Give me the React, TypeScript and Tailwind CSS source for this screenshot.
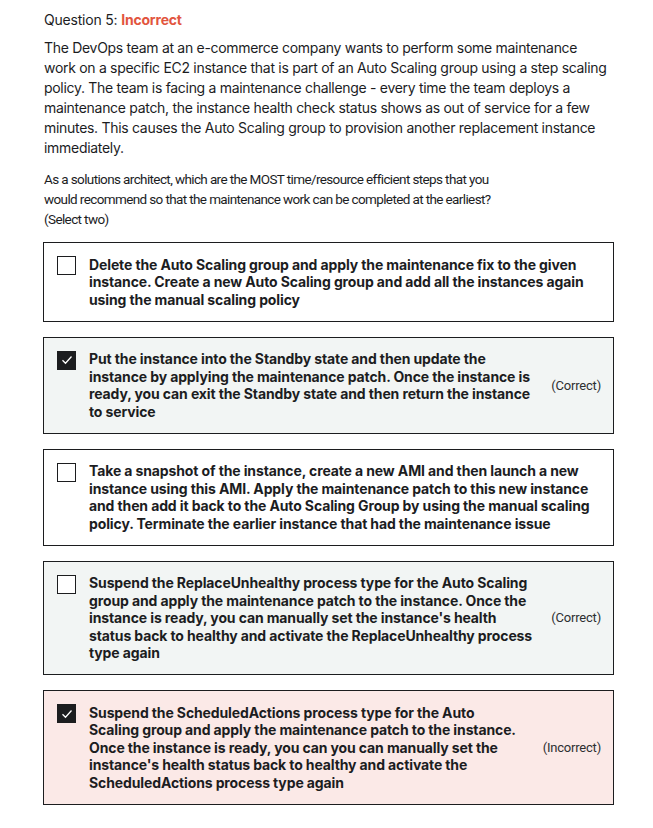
import React from "react";

type Opt = {
  lines: string[];
  checked: boolean;
  label?: string;
  bg: string;
};

const opts: Opt[] = [
  {
    lines: [
      "Delete the Auto Scaling group and apply the maintenance fix to the given",
      "instance. Create a new Auto Scaling group and add all the instances again",
      "using the manual scaling policy",
    ],
    checked: false,
    bg: "bg-white",
  },
  {
    lines: [
      "Put the instance into the Standby state and then update the",
      "instance by applying the maintenance patch. Once the instance is",
      "ready, you can exit the Standby state and then return the instance",
      "to service",
    ],
    checked: true,
    label: "(Correct)",
    bg: "bg-[#f2f5f4]",
  },
  {
    lines: [
      "Take a snapshot of the instance, create a new AMI and then launch a new",
      "instance using this AMI. Apply the maintenance patch to this new instance",
      "and then add it back to the Auto Scaling Group by using the manual scaling",
      "policy. Terminate the earlier instance that had the maintenance issue",
    ],
    checked: false,
    bg: "bg-white",
  },
  {
    lines: [
      "Suspend the ReplaceUnhealthy process type for the Auto Scaling",
      "group and apply the maintenance patch to the instance. Once the",
      "instance is ready, you can manually set the instance's health",
      "status back to healthy and activate the ReplaceUnhealthy process",
      "type again",
    ],
    checked: false,
    label: "(Correct)",
    bg: "bg-[#f2f5f4]",
  },
  {
    lines: [
      "Suspend the ScheduledActions process type for the Auto",
      "Scaling group and apply the maintenance patch to the instance.",
      "Once the instance is ready, you can you can manually set the",
      "instance's health status back to healthy and activate the",
      "ScheduledActions process type again",
    ],
    checked: true,
    label: "(Incorrect)",
    bg: "bg-[#fbe9e7]",
  },
];

function Check({ checked }: { checked: boolean }) {
  if (checked)
    return (
      <div className="w-[19px] h-[19px] shrink-0 bg-[#1c1d1f] flex items-center justify-center">
        <svg width="12" height="10" viewBox="0 0 12 10" fill="none">
          <path d="M1.5 5.2 L4.5 8.2 L10.5 1.5" stroke="white" strokeWidth="1.3" />
        </svg>
      </div>
    );
  return <div className="w-[19px] h-[19px] shrink-0 border border-[#1c1d1f] bg-white" />;
}

export default function App() {
  return (
    <div
      className="w-[653px] h-[828px] bg-white text-[#1c1d1f] pl-[44px] pt-[10px]"
      style={{ fontFamily: "Inter, 'Noto Sans', sans-serif" }}
    >
      <div className="text-[14px] leading-[20px] tracking-[-0.2px]">
        Question 5: <span className="font-bold text-[#e2553e]">Incorrect</span>
      </div>
      <div className="mt-[8px] text-[14px] leading-[20px] whitespace-nowrap tracking-[-0.3px]">
        <div>The DevOps team at an e-commerce company wants to perform some maintenance</div>
        <div>work on a specific EC2 instance that is part of an Auto Scaling group using a step scaling</div>
        <div>policy. The team is facing a maintenance challenge - every time the team deploys a</div>
        <div>maintenance patch, the instance health check status shows as out of service for a few</div>
        <div>minutes. This causes the Auto Scaling group to provision another replacement instance</div>
        <div>immediately.</div>
      </div>
      <div
        className="mt-[11px] text-[13.5px] leading-[20px] whitespace-nowrap tracking-[-0.62px]"
        style={{ fontFamily: "Roboto, sans-serif" }}
      >
        <div>As a solutions architect, which are the MOST time/resource efficient steps that you</div>
        <div>would recommend so that the maintenance work can be completed at the earliest?</div>
        <div>(Select two)</div>
      </div>
      <div className="mt-[13px] ml-[-1px] w-[571px] flex flex-col gap-[15px]">
        {opts.map((o, i) => (
          <div
            key={i}
            className={`border border-[#1c1d1f] ${o.bg} flex items-center pl-[13px] pr-[12px] py-[12.5px]`}
          >
            <div className="flex items-start gap-[13px] flex-1 self-stretch">
              <div className="pt-[0.5px]">
                <Check checked={o.checked} />
              </div>
              <div className="font-bold text-[14px] leading-[17.5px] whitespace-nowrap tracking-[-0.12px]">
                {o.lines.map((l, j) => (
                  <div key={j}>{l}</div>
                ))}
              </div>
            </div>
            {o.label && (
              <div
                className="text-[13px] text-[#2d2f31] leading-[17px] tracking-[-0.2px]"
                style={{ fontFamily: "Roboto, sans-serif" }}
              >
                {o.label}
              </div>
            )}
          </div>
        ))}
      </div>
    </div>
  );
}
